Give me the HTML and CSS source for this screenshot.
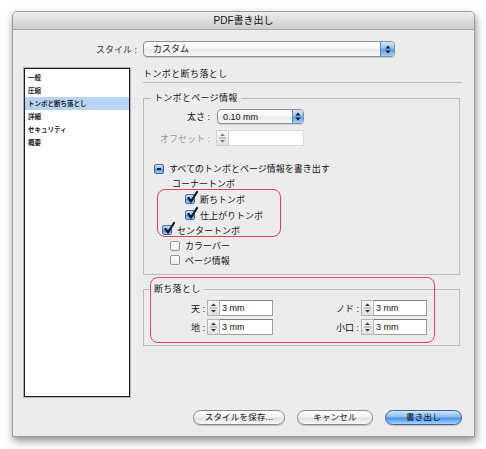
FILE: index.html
```html
<!DOCTYPE html>
<html lang="ja">
<head>
<meta charset="utf-8">
<title>PDF書き出し</title>
<link rel="stylesheet" href="styles.css">
</head>
<body>
<div class="window">
  <div class="titlebar">PDF書き出し</div>
  <div class="content">
    <div class="style-row">
      <span class="style-label">スタイル :</span>
      <div class="popup popup-wide">
        <span class="popup-text">カスタム</span>
        <span class="popup-btn"><svg width="6" height="9" viewBox="0 0 6 9"><path d="M3 0.5 L5.5 3.5 L0.5 3.5 Z M3 8.5 L5.5 5.5 L0.5 5.5 Z" fill="#111"/></svg></span>
      </div>
    </div>
    <div class="main">
      <ul class="list">
        <li>一般</li>
        <li>圧縮</li>
        <li class="sel">トンボと断ち落とし</li>
        <li>詳細</li>
        <li>セキュリティ</li>
        <li>概要</li>
      </ul>
      <div class="panel">
        <div class="heading">トンボと断ち落とし</div>
        <fieldset class="group g1">
          <legend>トンボとページ情報</legend>
          <div class="form-grid">
            <span class="flabel">太さ :</span>
            <div class="popup popup-small">
              <span class="popup-text">0.10 mm</span>
              <span class="popup-btn"><svg width="6" height="9" viewBox="0 0 6 9"><path d="M3 0.5 L5.5 3.5 L0.5 3.5 Z M3 8.5 L5.5 5.5 L0.5 5.5 Z" fill="#111"/></svg></span>
            </div>
            <span class="flabel dim">オフセット :</span>
            <div class="spin spin-off">
              <span class="stepper"><svg width="7" height="12" viewBox="0 0 7 12"><path d="M3.5 1.5 L6 4 L1 4 Z M3.5 10.5 L6 8 L1 8 Z" fill="#777"/><path d="M0 6 H7" stroke="#999" stroke-width="1"/></svg></span>
              <span class="field field-off"></span>
            </div>
          </div>
          <div class="checks">
            <div class="crow r-all"><span class="cb on mixed"><span class="dash"></span></span><span>すべてのトンボとページ情報を書き出す</span></div>
            <div class="crow r-corner"><span>コーナートンボ</span></div>
            <div class="crow r-trim"><span class="cb on"><svg class="tick" width="12" height="13" viewBox="0 0 12 13"><path d="M2.5 7 L5 10.5 L11 1" fill="none" stroke="#0d1a2e" stroke-width="2.2" stroke-linecap="round" stroke-linejoin="round"/></svg></span><span>断ちトンボ</span></div>
            <div class="crow r-trim"><span class="cb on"><svg class="tick" width="12" height="13" viewBox="0 0 12 13"><path d="M2.5 7 L5 10.5 L11 1" fill="none" stroke="#0d1a2e" stroke-width="2.2" stroke-linecap="round" stroke-linejoin="round"/></svg></span><span>仕上がりトンボ</span></div>
            <div class="crow r-center"><span class="cb on"><svg class="tick" width="12" height="13" viewBox="0 0 12 13"><path d="M2.5 7 L5 10.5 L11 1" fill="none" stroke="#0d1a2e" stroke-width="2.2" stroke-linecap="round" stroke-linejoin="round"/></svg></span><span>センタートンボ</span></div>
            <div class="crow r-color"><span class="cb"></span><span>カラーバー</span></div>
            <div class="crow r-page"><span class="cb"></span><span>ページ情報</span></div>
          </div>
        </fieldset>
        <fieldset class="group g2">
          <legend>断ち落とし</legend>
          <div class="bleed-row">
            <span class="blabel b1">天 :</span>
            <div class="spin"><span class="stepper"><svg width="7" height="12" viewBox="0 0 7 12"><path d="M3.5 1.5 L6 4 L1 4 Z M3.5 10.5 L6 8 L1 8 Z" fill="#333"/><path d="M0 6 H7" stroke="#999" stroke-width="1"/></svg></span><span class="field">3 mm</span></div>
            <span class="blabel b2">ノド :</span>
            <div class="spin"><span class="stepper"><svg width="7" height="12" viewBox="0 0 7 12"><path d="M3.5 1.5 L6 4 L1 4 Z M3.5 10.5 L6 8 L1 8 Z" fill="#333"/><path d="M0 6 H7" stroke="#999" stroke-width="1"/></svg></span><span class="field">3 mm</span></div>
          </div>
          <div class="bleed-row">
            <span class="blabel b1">地 :</span>
            <div class="spin"><span class="stepper"><svg width="7" height="12" viewBox="0 0 7 12"><path d="M3.5 1.5 L6 4 L1 4 Z M3.5 10.5 L6 8 L1 8 Z" fill="#333"/><path d="M0 6 H7" stroke="#999" stroke-width="1"/></svg></span><span class="field">3 mm</span></div>
            <span class="blabel b2">小口 :</span>
            <div class="spin"><span class="stepper"><svg width="7" height="12" viewBox="0 0 7 12"><path d="M3.5 1.5 L6 4 L1 4 Z M3.5 10.5 L6 8 L1 8 Z" fill="#333"/><path d="M0 6 H7" stroke="#999" stroke-width="1"/></svg></span><span class="field">3 mm</span></div>
          </div>
        </fieldset>
        <div class="mark m1"></div>
        <div class="mark m2"></div>
      </div>
    </div>
    <div class="buttons">
      <span class="btn b-save">スタイルを保存...</span>
      <span class="btn b-cancel">キャンセル</span>
      <span class="btn b-default">書き出し</span>
    </div>
  </div>
</div>
</body>
</html>
```

FILE: styles.css
```css
* { box-sizing: border-box; }
html, body { margin: 0; padding: 0; background: #fff; }
body {
  font-family: "Liberation Sans", "Noto Sans CJK JP", sans-serif;
  font-size: 9px;
  color: #111;
  width: 486px;
  height: 449px;
  overflow: hidden;
}
.window {
  margin: 11px 0 0 12px;
  width: 463px;
  height: 426px;
  border: 1px solid #9c9c9c;
  border-radius: 5px 5px 0 0;
  box-shadow: 1px 4px 8px rgba(0,0,0,0.45);
  display: flex;
  flex-direction: column;
  overflow: hidden;
  background: #ececec;
}
.titlebar {
  height: 18px;
  flex: none;
  background: linear-gradient(#ececec, #dadada 60%, #cdcdcd);
  border-bottom: 1px solid #a5a5a5;
  text-align: center;
  font-size: 10px;
  line-height: 17px;
  color: #111;
}
.content {
  flex: 1;
  background: repeating-linear-gradient(to bottom, #eeeeee 0 1px, #eaeaea 1px 2px);
  display: flex;
  flex-direction: column;
}
.style-row {
  margin-top: 11px;
  height: 16px;
  display: flex;
  align-items: center;
}
.style-label {
  width: 124px;
  text-align: right;
  color: #333;
  margin-right: 6px;
}
.popup {
  height: 16px;
  border: 1px solid #8e8e8e;
  border-radius: 4px;
  background: linear-gradient(#ffffff, #f6f6f6 45%, #e9e9e9 55%, #f7f7f7);
  display: flex;
  align-items: center;
  overflow: hidden;
  box-shadow: 0 1px 1px rgba(0,0,0,0.15);
}
.popup-wide { width: 252px; }
.popup-text { flex: 1; padding-left: 9px; line-height: 14px; }
.popup-btn {
  width: 14px;
  height: 100%;
  flex: none;
  display: flex;
  align-items: center;
  justify-content: center;
  border-left: 1px solid #5d86bb;
  background: linear-gradient(#d6e9fd, #8fbff2 45%, #5a9bea 55%, #9fd1ff);
}
.main {
  margin-top: 11px;
  padding-left: 11px;
  display: flex;
  height: 329px;
}
.list {
  list-style: none;
  margin: 0;
  padding: 2px 0 0;
  width: 106px;
  height: 329px;
  background: #fff;
  border: 1px solid #1e1e1e;
  box-shadow: 0 0 0 1px #b0b0b0;
  font-size: 6.5px;
  font-weight: bold;
  color: #222;
}
.list li {
  height: 13px;
  line-height: 13px;
  padding-left: 3px;
}
.list li.sel { background: #b7d4f7; }
.panel {
  position: relative;
  margin-left: 13px;
  width: 319px;
}
.heading {
  height: 15px;
  line-height: 13px;
  border-bottom: 1px solid #b9b9b9;
  letter-spacing: 0.4px;
}
.group {
  margin: 0;
  padding: 0;
  width: 317px;
  border: 1px solid #bcbcbc;
  min-inline-size: 0;
}
.group legend {
  margin-left: 7px;
  padding: 0 3px;
  line-height: 12px;
  height: 12px;
  letter-spacing: 0.3px;
}
.g1 { margin-top: 9px; padding: 5px 0 8px; }
.form-grid {
  display: grid;
  grid-template-columns: 66px 88px;
  column-gap: 6px;
  row-gap: 6px;
  align-items: center;
}
.flabel { text-align: right; }
.dim { color: #9a9a9a; }
.popup-small { width: 87px; height: 15px; margin-left: 1px; }
.popup-small .popup-text { padding-left: 5px; }
.popup-small .popup-btn { width: 11px; }
.spin { display: flex; height: 16px; }
.stepper {
  width: 13px;
  height: 16px;
  flex: none;
  display: flex;
  align-items: center;
  justify-content: center;
  background: linear-gradient(#f6f6f6, #e2e2e2);
  border: 1px solid #b3b3b3;
}
.field {
  height: 16px;
  background: #fff;
  border: 1px solid #9d9d9d;
  border-top-color: #7c7c7c;
  border-left: none;
  line-height: 14px;
  padding-left: 2px;
  font-size: 9px;
}
.spin-off .field { width: 76px; }
.field-off { border-color: #d8d8d8; }
.spin-off .stepper { border-color: #d0d0d0; }
.checks { margin-top: 15px; }
.crow {
  height: 15px;
  display: flex;
  align-items: center;
  gap: 5px;
}
.r-all { padding-left: 10px; }
.r-corner { padding-left: 28px; }
.r-trim { padding-left: 41px; height: 16px; }
.r-center { padding-left: 18px; height: 14px; }
.r-color { padding-left: 26px; height: 17px; }
.r-page { padding-left: 26px; height: 12px; }
.cb {
  position: relative;
  width: 10px;
  height: 10px;
  flex: none;
  border: 1px solid #939393;
  border-radius: 2px;
  background: linear-gradient(#ffffff, #ececec);
}
.cb.on {
  border-color: #456a9c;
  background: linear-gradient(#cfe4fb, #86b8ef 45%, #4f92e6 55%, #9ccdfd);
}
.tick {
  position: absolute;
  left: 0;
  top: -4px;
  overflow: visible;
}
.dash {
  position: absolute;
  left: 2px;
  top: 3px;
  width: 4px;
  height: 2px;
  background: #15233a;
}
.g2 { margin-top: 8px; padding: 5px 0 10px; }
.bleed-row {
  display: flex;
  align-items: center;
  height: 16px;
}
.bleed-row + .bleed-row { margin-top: 3px; }
.blabel { text-align: right; margin-right: 2px; }
.b1 { width: 61px; }
.b2 { width: 86px; }
.bleed-row .field { width: 53px; }
.mark {
  position: absolute;
  border: 1.5px solid #e8414f;
  border-radius: 8px;
}
.m1 { left: 14px; top: 121px; width: 124px; height: 48px; }
.m2 { left: 7px; top: 209px; width: 285px; height: 66px; }
.buttons {
  margin-top: 13px;
  padding-right: 12px;
  display: flex;
  justify-content: flex-end;
  gap: 12px;
}
.btn {
  height: 15px;
  border: 1px solid #8a8a8a;
  border-radius: 8px;
  background: linear-gradient(#ffffff, #f3f3f3 45%, #e2e2e2 55%, #f8f8f8);
  box-shadow: 0 1px 1px rgba(0,0,0,0.2);
  text-align: center;
  line-height: 13px;
  font-size: 8.5px;
  letter-spacing: 0.2px;
}
.b-save { width: 92px; }
.b-cancel { width: 76px; }
.b-default {
  width: 77px;
  border-color: #3b63a6;
  background: linear-gradient(#cfe5fd, #8bbcf2 45%, #4d8fe6 55%, #a7d6ff);
}
```
